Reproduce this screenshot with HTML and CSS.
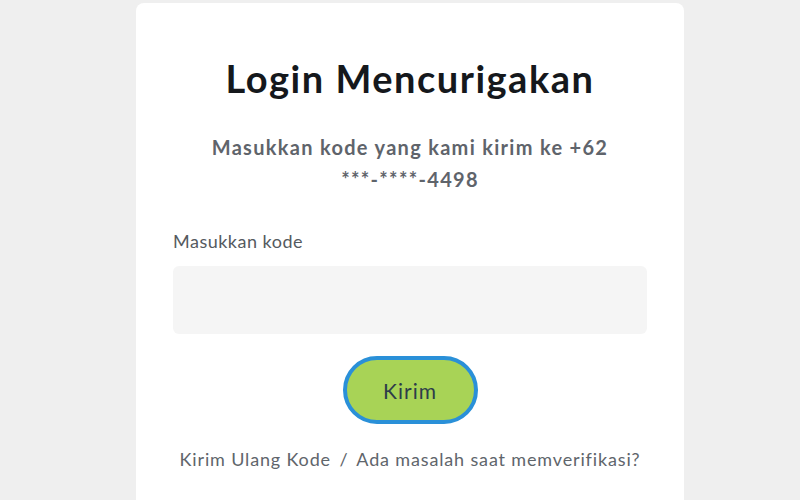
FILE: index.html
```html
<!DOCTYPE html>
<html lang="id">
<head>
    <meta charset="UTF-8">
    <meta name="viewport" content="width=device-width, initial-scale=1.0">
    <title>Login Mencurigakan</title>
    <link rel="stylesheet" href="styles.css">
</head>
<body>
    <div class="page">
        <div class="card">
            <h1 class="title">Login Mencurigakan</h1>
            <p class="desc">Masukkan kode yang kami kirim ke +62<br>***-****-4498</p>
            <label class="label" for="kode">Masukkan kode</label>
            <input class="codeInput" id="kode" type="text">
            <div class="actions">
                <button class="sendBtn" type="button">Kirim</button>
            </div>
            <div class="links">
                <a href="#">Kirim Ulang Kode</a>
                <span class="sep">/</span>
                <a href="#">Ada masalah saat memverifikasi?</a>
            </div>
        </div>
    </div>
</body>
</html>
```

FILE: styles.css
```css
body{
    margin: 0;
    padding: 0;
    background-color: #efefef;
    font-family: Lato, "Noto Sans", sans-serif;
}
.page{
    display: flex;
    justify-content: center;
    padding: 3px 0 0 20px;
    height: 497px;
    overflow: hidden;
}
.card{
    width: 548px;
    min-height: 540px;
    flex-shrink: 0;
    box-sizing: border-box;
    background-color: #fff;
    border-radius: 8px;
    padding: 53px 37px 60px;
    display: flex;
    flex-direction: column;
}
.card > *{
    flex-shrink: 0;
}
.title{
    margin: 0;
    text-align: center;
    font-size: 38px;
    font-weight: 700;
    letter-spacing: 1.5px;
    color: #15181c;
    line-height: 44px;
}
.desc{
    margin: 31px 0 0;
    text-align: center;
    font-size: 20px;
    font-weight: 700;
    letter-spacing: 1.3px;
    color: #5f646b;
    line-height: 32px;
}
.label{
    margin-top: 35px;
    font-size: 18px;
    letter-spacing: 0.5px;
    color: #555a60;
}
.codeInput{
    margin-top: 14px;
    height: 68px;
    box-sizing: border-box;
    border: none;
    border-radius: 6px;
    background-color: #f5f5f5;
    outline: none;
}
.actions{
    display: flex;
    justify-content: center;
    margin-top: 22px;
}
.sendBtn{
    width: 135px;
    height: 68px;
    border: 4px solid #2a90d8;
    border-radius: 34px;
    background-color: #a8d356;
    color: #2d3c4a;
    font-family: Lato, "Noto Sans", sans-serif;
    font-size: 21px;
    letter-spacing: 1px;
}
.links{
    margin-top: 24px;
    text-align: center;
    font-size: 18px;
    letter-spacing: 0.85px;
    color: #60656b;
}
.links a{
    color: inherit;
    text-decoration: none;
}
.sep{
    margin: 0 3px;
}
```
